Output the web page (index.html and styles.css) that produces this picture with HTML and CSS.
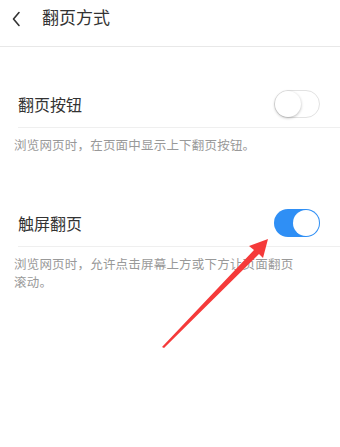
FILE: index.html
```html
<!DOCTYPE html>
<html lang="zh">
<head>
<meta charset="utf-8">
<link rel="stylesheet" href="styles.css">
</head>
<body>
<div class="page">
  <div class="header">
    <svg class="back" width="10" height="16" viewBox="0 0 10 16"><path d="M7 1.5 L1.5 8 L7 14.5" fill="none" stroke="#333" stroke-width="1.6" stroke-linecap="round" stroke-linejoin="round"/></svg>
    <span class="title">翻页方式</span>
  </div>

  <div class="group first">
    <div class="row">
      <span class="label">翻页按钮</span>
      <span class="switch off"><span class="knob"></span></span>
    </div>
    <div class="desc">浏览网页时，在页面中显示上下翻页按钮。</div>
  </div>

  <div class="group second">
    <div class="row">
      <span class="label">触屏翻页</span>
      <span class="switch on"><span class="knob"></span></span>
    </div>
    <div class="desc">浏览网页时，允许点击屏幕上方或下方让页面翻页<br>滚动。</div>
  </div>

  <svg class="arrow" width="340" height="447" viewBox="0 0 340 447">
    <polygon points="162,347 254,250 249,246 268,239 263,258 259,254 164,348" fill="#f53a3a"/>
  </svg>
</div>
</body>
</html>
```

FILE: styles.css
```css
html, body {
  margin: 0;
  padding: 0;
  background: #fff;
}
body {
  font-family: "Noto Sans CJK SC", "Noto Sans", sans-serif;
  color: #333;
}
.page {
  position: relative;
  width: 340px;
  height: 447px;
  overflow: hidden;
}
.header {
  border-bottom: 1px solid #e8e8e8;
  display: flex;
  align-items: flex-start;
  padding-top: 4px;
  box-sizing: border-box;
  height: 47px;
}
.back {
  margin-left: 12px;
  margin-top: 7px;
}
.title {
  margin-left: 20px;
  font-size: 17px;
  line-height: 26px;
  color: #333;
}
.group.first {
  margin-top: 34px;
}
.group.second {
  margin-top: 37px;
}
.row {
  margin-left: 18px;
  padding-right: 20px;
  height: 46px;
  border-bottom: 1px solid #efefef;
  display: flex;
  align-items: center;
  justify-content: space-between;
}
.group.second .row {
  height: 47px;
}
.label {
  font-size: 16px;
  color: #333;
}
.desc {
  padding: 8px 14px;
  font-size: 12.5px;
  line-height: 18px;
  letter-spacing: 0.2px;
  color: #999;
}
.switch {
  width: 46px;
  height: 28px;
  border-radius: 14px;
  box-sizing: border-box;
  display: flex;
  align-items: center;
}
.switch.off {
  border: 1px solid #e2e2e2;
  background: #fff;
}
.switch.off .knob {
  width: 26px;
  height: 26px;
  border-radius: 50%;
  background: #fff;
  box-shadow: 0 1px 3px rgba(0,0,0,0.28);
}
.switch.on {
  background: #2f8ff5;
  justify-content: flex-end;
  padding-right: 1px;
}
.switch.on .knob {
  width: 26px;
  height: 26px;
  border-radius: 50%;
  background: #fff;
}
.arrow {
  position: absolute;
  left: 0;
  top: 0;
  pointer-events: none;
}
```
